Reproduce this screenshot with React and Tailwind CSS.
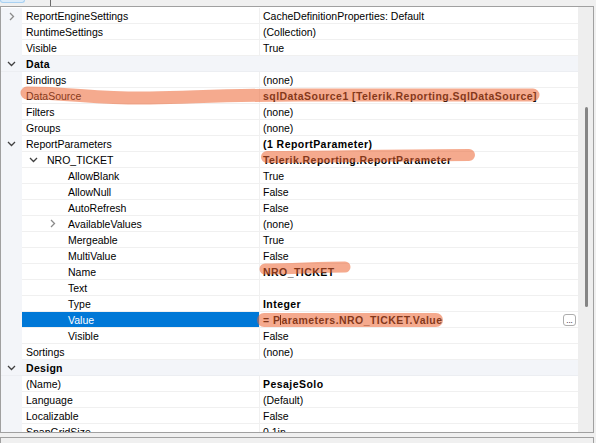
import React from 'react';

const Down = ({ className = '' }) => (
  <svg width="9" height="6" viewBox="0 0 9 6" className={className}>
    <polyline points="1,1 4.5,4.5 8,1" fill="none" stroke="#404040" strokeWidth="1.3" />
  </svg>
);

const Right = ({ className = '' }) => (
  <svg width="6" height="9" viewBox="0 0 6 9" className={className}>
    <polyline points="1,1 4.5,4.5 1,8" fill="none" stroke="#8a8a8a" strokeWidth="1.3" />
  </svg>
);

const rows = [
  { name: 'ReportEngineSettings', value: 'CacheDefinitionProperties: Default', gutter: 'right' },
  { name: 'RuntimeSettings', value: '(Collection)' },
  { name: 'Visible', value: 'True' },
  { name: 'Data', category: true },
  { name: 'Bindings', value: '(none)' },
  { name: 'DataSource', value: 'sqlDataSource1 [Telerik.Reporting.SqlDataSource]', bold: true },
  { name: 'Filters', value: '(none)' },
  { name: 'Groups', value: '(none)' },
  { name: 'ReportParameters', value: '(1 ReportParameter)', bold: true, gutter: 'down' },
  { name: 'NRO_TICKET', value: 'Telerik.Reporting.ReportParameter', bold: true, level: 1, toggle: 'down' },
  { name: 'AllowBlank', value: 'True', level: 2 },
  { name: 'AllowNull', value: 'False', level: 2 },
  { name: 'AutoRefresh', value: 'False', level: 2 },
  { name: 'AvailableValues', value: '(none)', level: 2, toggle: 'right' },
  { name: 'Mergeable', value: 'True', level: 2 },
  { name: 'MultiValue', value: 'False', level: 2 },
  { name: 'Name', value: 'NRO_TICKET', bold: true, level: 2 },
  { name: 'Text', value: '', level: 2 },
  { name: 'Type', value: 'Integer', bold: true, level: 2 },
  { name: 'Value', value: '= Parameters.NRO_TICKET.Value', level: 2, selected: true },
  { name: 'Visible', value: 'False', level: 2 },
  { name: 'Sortings', value: '(none)' },
  { name: 'Design', category: true },
  { name: '(Name)', value: 'PesajeSolo', bold: true },
  { name: 'Language', value: '(Default)' },
  { name: 'Localizable', value: 'False' },
  { name: 'SnapGridSize', value: '0.1in' },
];

function Row({ row }) {
  if (row.category) {
    return (
      <div className="flex h-[16px] shrink-0 items-center bg-[#f3f5f9] border-b border-[#eceef2]">
        <div className="flex w-[21px] justify-center"><Down /></div>
        <span className="pl-[4px] font-bold tracking-[0.3px]">{row.name}</span>
      </div>
    );
  }
  const level = row.level || 0;
  return (
    <div className="flex h-[16px] shrink-0">
      <div className="flex w-[21px] items-center justify-center bg-[#f3f5f9]">
        {row.gutter === 'down' && <Down />}
        {row.gutter === 'right' && <Right />}
      </div>
      <div className="flex flex-1 border-b border-[#f0f0f0]">
        <div className={`flex w-[237px] items-center pl-[4px] ${row.selected ? 'bg-[#0078d7] text-white' : ''}`}>
          {level === 2 && <div className="w-[21px]" />}
          {level >= 1 && (
            <div className="flex w-[21px] items-center pl-[3px]">
              {row.toggle === 'down' && <Down />}
              {row.toggle === 'right' && <Right />}
            </div>
          )}
          <span>{row.name}</span>
        </div>
        <div className="w-px bg-[#f0f0f0]" />
        <div className="flex flex-1 items-center justify-between pl-[3px]">
          {row.selected ? (
            <span className="font-bold tracking-[0.45px]">
              = P<span className="relative inline-block h-[10px] w-0 border-l border-black align-[-1px]" />arameters.NRO_TICKET.Value
            </span>
          ) : (
            <span className={row.bold ? 'font-bold tracking-[0.45px]' : ''}>{row.value}</span>
          )}
          {row.selected && (
            <div className="mr-[2px] flex h-[12px] w-[13px] items-end justify-center rounded-[3px] border border-[#adadad] bg-white text-[8px] leading-[9px]">
              ...
            </div>
          )}
        </div>
      </div>
    </div>
  );
}

export default function App() {
  return (
    <div className="relative h-[443px] w-[596px] overflow-hidden bg-[#f0f0f0] font-['Liberation_Sans',Arial,sans-serif] text-[10.5px] leading-[16px] text-black">
      {/* top strip */}
      <div className="flex h-[6px] items-start">
        <div className="h-[3px] w-[25px] rounded-b-[3px] border border-t-0 border-[#a9d1f2] bg-[#dcecfa]" />
        <div className="ml-[25px] h-[6px] w-px bg-[#6b6b6b]" />
      </div>

      {/* property grid */}
      <div className="flex h-[427px] w-[594px] border border-[#a0a0a0] bg-white">
        <div className="flex flex-1 flex-col overflow-hidden pt-px">
          {rows.map((r, i) => (
            <Row key={i} row={r} />
          ))}
        </div>
        <div className="w-[15px] bg-[#eeeeee] pl-[7px] pt-[100px]">
          <div className="h-[200px] w-[3px] rounded-full bg-[#858585]" />
        </div>
      </div>

      {/* description pane */}
      <div className="mt-[4px] h-[10px] w-[594px] border border-b-0 border-[#a0a0a0] bg-[#f0f0f0]" />

      {/* marker highlights */}
      <svg className="pointer-events-none absolute inset-0" width="596" height="443">
        <g fill="none" stroke="rgba(236,100,50,0.55)" strokeLinecap="round">
          <path d="M 27 93 C 70 93, 100 99, 150 98 S 230 95, 300 95 L 533 95" strokeWidth="13" />
          <path d="M 267 157 C 330 157, 400 155, 469 155" strokeWidth="12" />
          <path d="M 265 269 C 290 269, 320 267, 345 267" strokeWidth="11" />
          <path d="M 264 320 L 436 320" strokeWidth="14" />
        </g>
      </svg>
    </div>
  );
}
